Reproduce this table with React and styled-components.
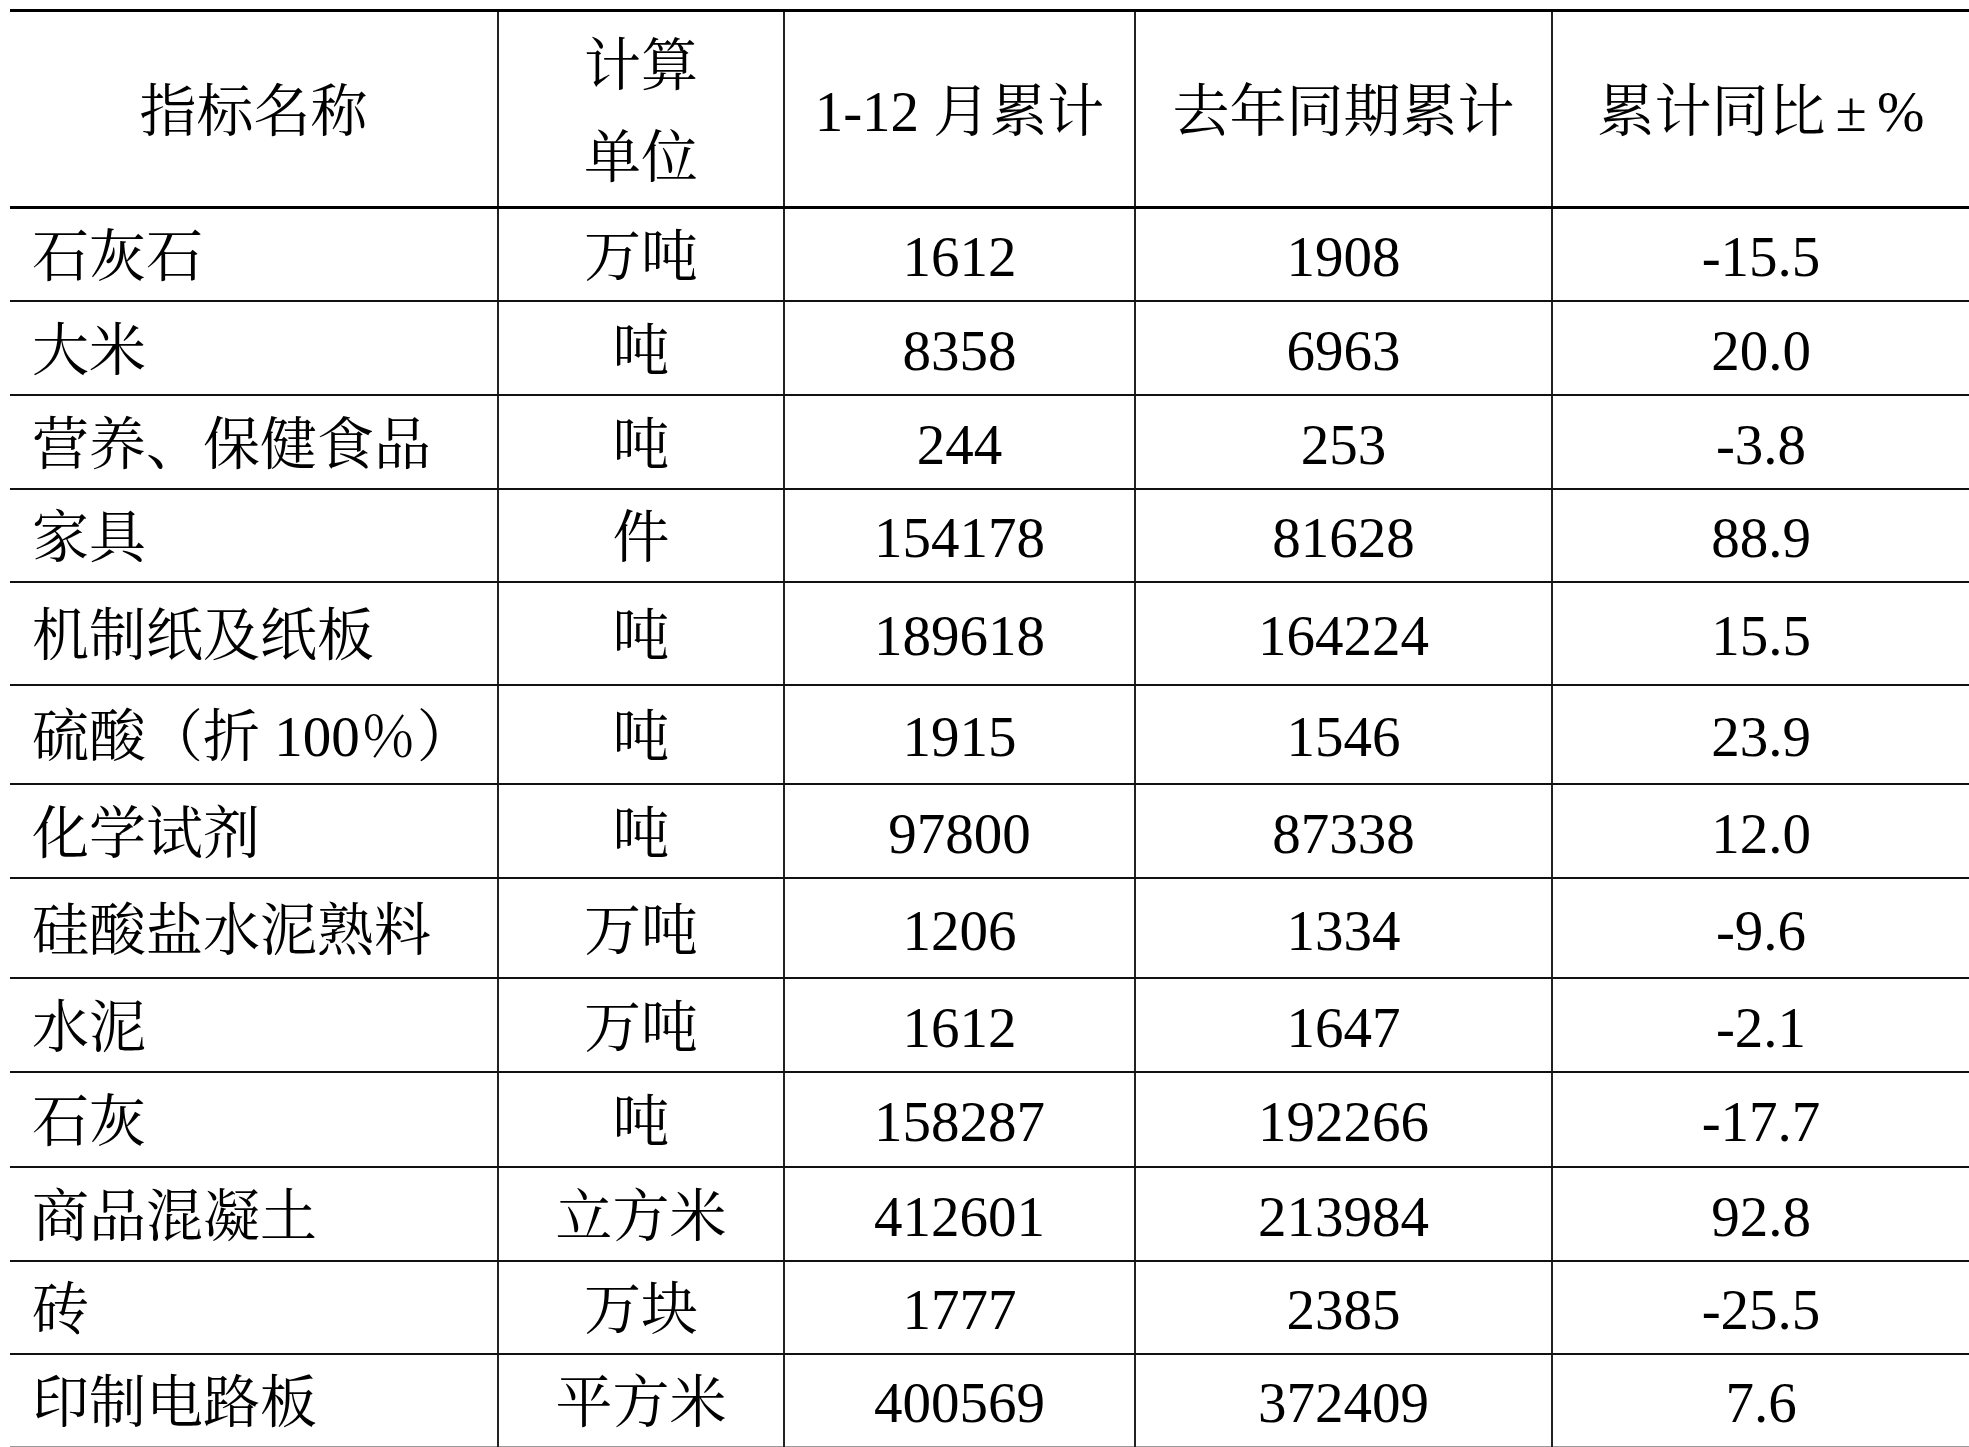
import React from 'react';
import styled, { createGlobalStyle } from 'styled-components';

const GlobalStyle = createGlobalStyle`
  html, body {
    margin: 0;
    padding: 0;
    background: #ffffff;
  }
  body {
    font-family: "Liberation Serif", "Noto Serif CJK SC", "Noto Sans CJK SC", serif;
    color: #000000;
  }
`;

const Page = styled.div`
  padding: 9px 0 0 10px;
  width: 1959px;
`;

const Table = styled.table`
  border-collapse: collapse;
  table-layout: fixed;
  width: 1959px;
  border-top: 3px solid #000000;
  font-size: 57px;
  line-height: 1;
`;

const Row = styled.tr`
  height: ${(props) => props.height}px;
  & > td {
    border-bottom: ${(props) => (props.last ? '1px solid #9a9a9a' : '2px solid #111111')};
  }
`;

const HeadRow = styled.tr`
  height: 197px;
  & > th {
    border-bottom: 3px solid #000000;
  }
`;

const HeadCell = styled.th`
  font-weight: 400;
  text-align: center;
  vertical-align: middle;
  padding: 6px 0 0;
  line-height: 92px;
  white-space: nowrap;
  border-left: ${(props) => (props.first ? 'none' : '2px solid #222222')};
`;

const Cell = styled.td`
  padding: ${(props) => (props.first ? '5px 0 0 22px' : '5px 0 0')};
  text-align: ${(props) => (props.first ? 'left' : 'center')};
  vertical-align: middle;
  white-space: nowrap;
  border-left: ${(props) => (props.first ? 'none' : '2px solid #222222')};
`;

const Wide = styled.span`
  margin: 0 ${(props) => props.gap}px;
`;

const widths = [488, 286, 351, 417, 417];

const rows = [
  { name: '石灰石', unit: '万吨', cur: '1612', prev: '1908', rate: '-15.5', h: 93 },
  { name: '大米', unit: '吨', cur: '8358', prev: '6963', rate: '20.0', h: 94 },
  { name: '营养、保健食品', unit: '吨', cur: '244', prev: '253', rate: '-3.8', h: 94 },
  { name: '家具', unit: '件', cur: '154178', prev: '81628', rate: '88.9', h: 93 },
  { name: '机制纸及纸板', unit: '吨', cur: '189618', prev: '164224', rate: '15.5', h: 103 },
  { name: '硫酸（折 100％）', unit: '吨', cur: '1915', prev: '1546', rate: '23.9', h: 99 },
  { name: '化学试剂', unit: '吨', cur: '97800', prev: '87338', rate: '12.0', h: 94 },
  { name: '硅酸盐水泥熟料', unit: '万吨', cur: '1206', prev: '1334', rate: '-9.6', h: 100 },
  { name: '水泥', unit: '万吨', cur: '1612', prev: '1647', rate: '-2.1', h: 94 },
  { name: '石灰', unit: '吨', cur: '158287', prev: '192266', rate: '-17.7', h: 95 },
  { name: '商品混凝土', unit: '立方米', cur: '412601', prev: '213984', rate: '92.8', h: 94 },
  { name: '砖', unit: '万块', cur: '1777', prev: '2385', rate: '-25.5', h: 93 },
  { name: '印制电路板', unit: '平方米', cur: '400569', prev: '372409', rate: '7.6', h: 93 },
];

function App() {
  return (
    <>
      <GlobalStyle />
      <Page>
        <Table>
          <colgroup>
            {widths.map((w, i) => (
              <col key={i} style={{ width: `${w}px` }} />
            ))}
          </colgroup>
          <thead>
            <HeadRow>
              <HeadCell first>指标名称</HeadCell>
              <HeadCell>
                计算
                <br />
                单位
              </HeadCell>
              <HeadCell>1-12 月累计</HeadCell>
              <HeadCell>去年同期累计</HeadCell>
              <HeadCell>
                累计同比<Wide gap={10}>±</Wide>%
              </HeadCell>
            </HeadRow>
          </thead>
          <tbody>
            {rows.map((r, i) => (
              <Row key={r.name} height={r.h} last={i === rows.length - 1}>
                <Cell first>{r.name}</Cell>
                <Cell>{r.unit}</Cell>
                <Cell>{r.cur}</Cell>
                <Cell>{r.prev}</Cell>
                <Cell>{r.rate}</Cell>
              </Row>
            ))}
          </tbody>
        </Table>
      </Page>
    </>
  );
}

export default App;
